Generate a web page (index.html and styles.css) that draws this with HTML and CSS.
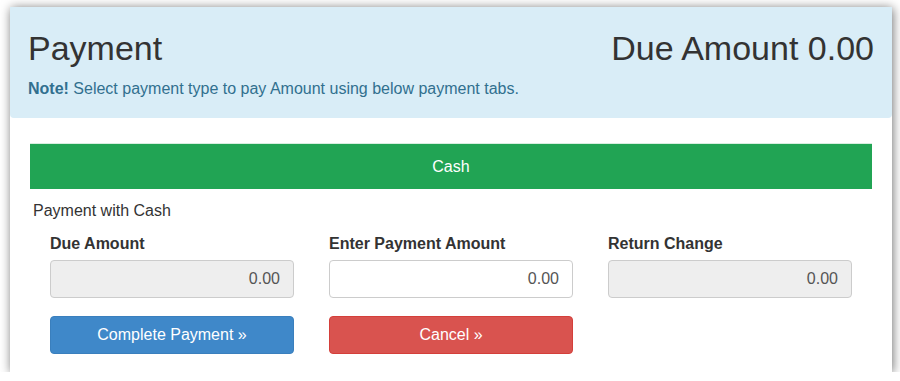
FILE: index.html
```html
<!DOCTYPE html>
<html>
<head>
    <title>Payment</title>
    <link rel="stylesheet" href="styles.css">
</head>
<body>
    <div class="panel">
        <div class="alert">
            <div class="alert-head">
                <h1>Payment</h1>
                <h1>Due Amount 0.00</h1>
            </div>
            <p class="note"><strong>Note!</strong> Select payment type to pay Amount using below payment tabs.</p>
        </div>

        <div class="panel-body">
            <div class="tab">Cash</div>
            <p class="method">Payment with Cash</p>

            <div class="fields">
                <div class="field">
                    <label>Due Amount</label>
                    <input type="text" class="input-box" value="0.00" disabled>
                </div>
                <div class="field">
                    <label>Enter Payment Amount</label>
                    <input type="text" class="input-box" value="0.00">
                </div>
                <div class="field">
                    <label>Return Change</label>
                    <input type="text" class="input-box" value="0.00" disabled>
                </div>
                <button class="btn btn-blue">Complete Payment &raquo;</button>
                <button class="btn btn-red">Cancel &raquo;</button>
            </div>
        </div>
    </div>
</body>
</html>
```

FILE: styles.css
```css
body {
    font-family: 'Liberation Sans', Arial, sans-serif;
    font-size: 16px;
    line-height: 22px;
    margin: 0;
    background: #fff;
    color: #333;
}

.panel {
    margin: 7px 8px 0 10px;
    background: #fff;
    box-shadow: 1px 1px 10px rgba(0, 0, 0, 0.55);
}

.alert {
    background: #d9edf7;
    padding: 21px 18px 18px 18px;
    border-radius: 0 0 4px 4px;
}

.alert-head {
    display: flex;
    justify-content: space-between;
}

h1 {
    margin: 0;
    font-size: 34px;
    font-weight: normal;
    line-height: 40px;
    color: #333;
}

.note {
    margin: 10px 0 0 0;
    color: #31708f;
}

.panel-body {
    padding: 25px 20px 18px 20px;
}

.tab {
    height: 46px;
    line-height: 45px;
    background: #21a454;
    color: #fff;
    text-align: center;
    border-top: 1px solid #d8eee0;
    box-sizing: border-box;
}

.method {
    margin: 11px 0 0 3px;
}

.fields {
    display: grid;
    grid-template-columns: repeat(3, 244px);
    column-gap: 35px;
    row-gap: 18px;
    padding-left: 20px;
    margin-top: 11px;
}

.field label {
    display: block;
    font-weight: bold;
    margin-bottom: 5px;
}

.input-box {
    display: block;
    width: 100%;
    height: 38px;
    box-sizing: border-box;
    padding: 0 13px;
    border: 1px solid #ccc;
    border-radius: 4px;
    background: #fff;
    font-family: inherit;
    font-size: 16px;
    color: #555;
    text-align: right;
}

.input-box:disabled {
    background: #eee;
    color: #555;
}

.btn {
    height: 38px;
    border: 1px solid transparent;
    border-radius: 4px;
    color: #fff;
    font-family: inherit;
    font-size: 16px;
    cursor: pointer;
}

.btn-blue {
    background: #3f88c9;
    border-color: #3a7fbd;
}

.btn-red {
    background: #d9534f;
    border-color: #d43f3a;
}
```
